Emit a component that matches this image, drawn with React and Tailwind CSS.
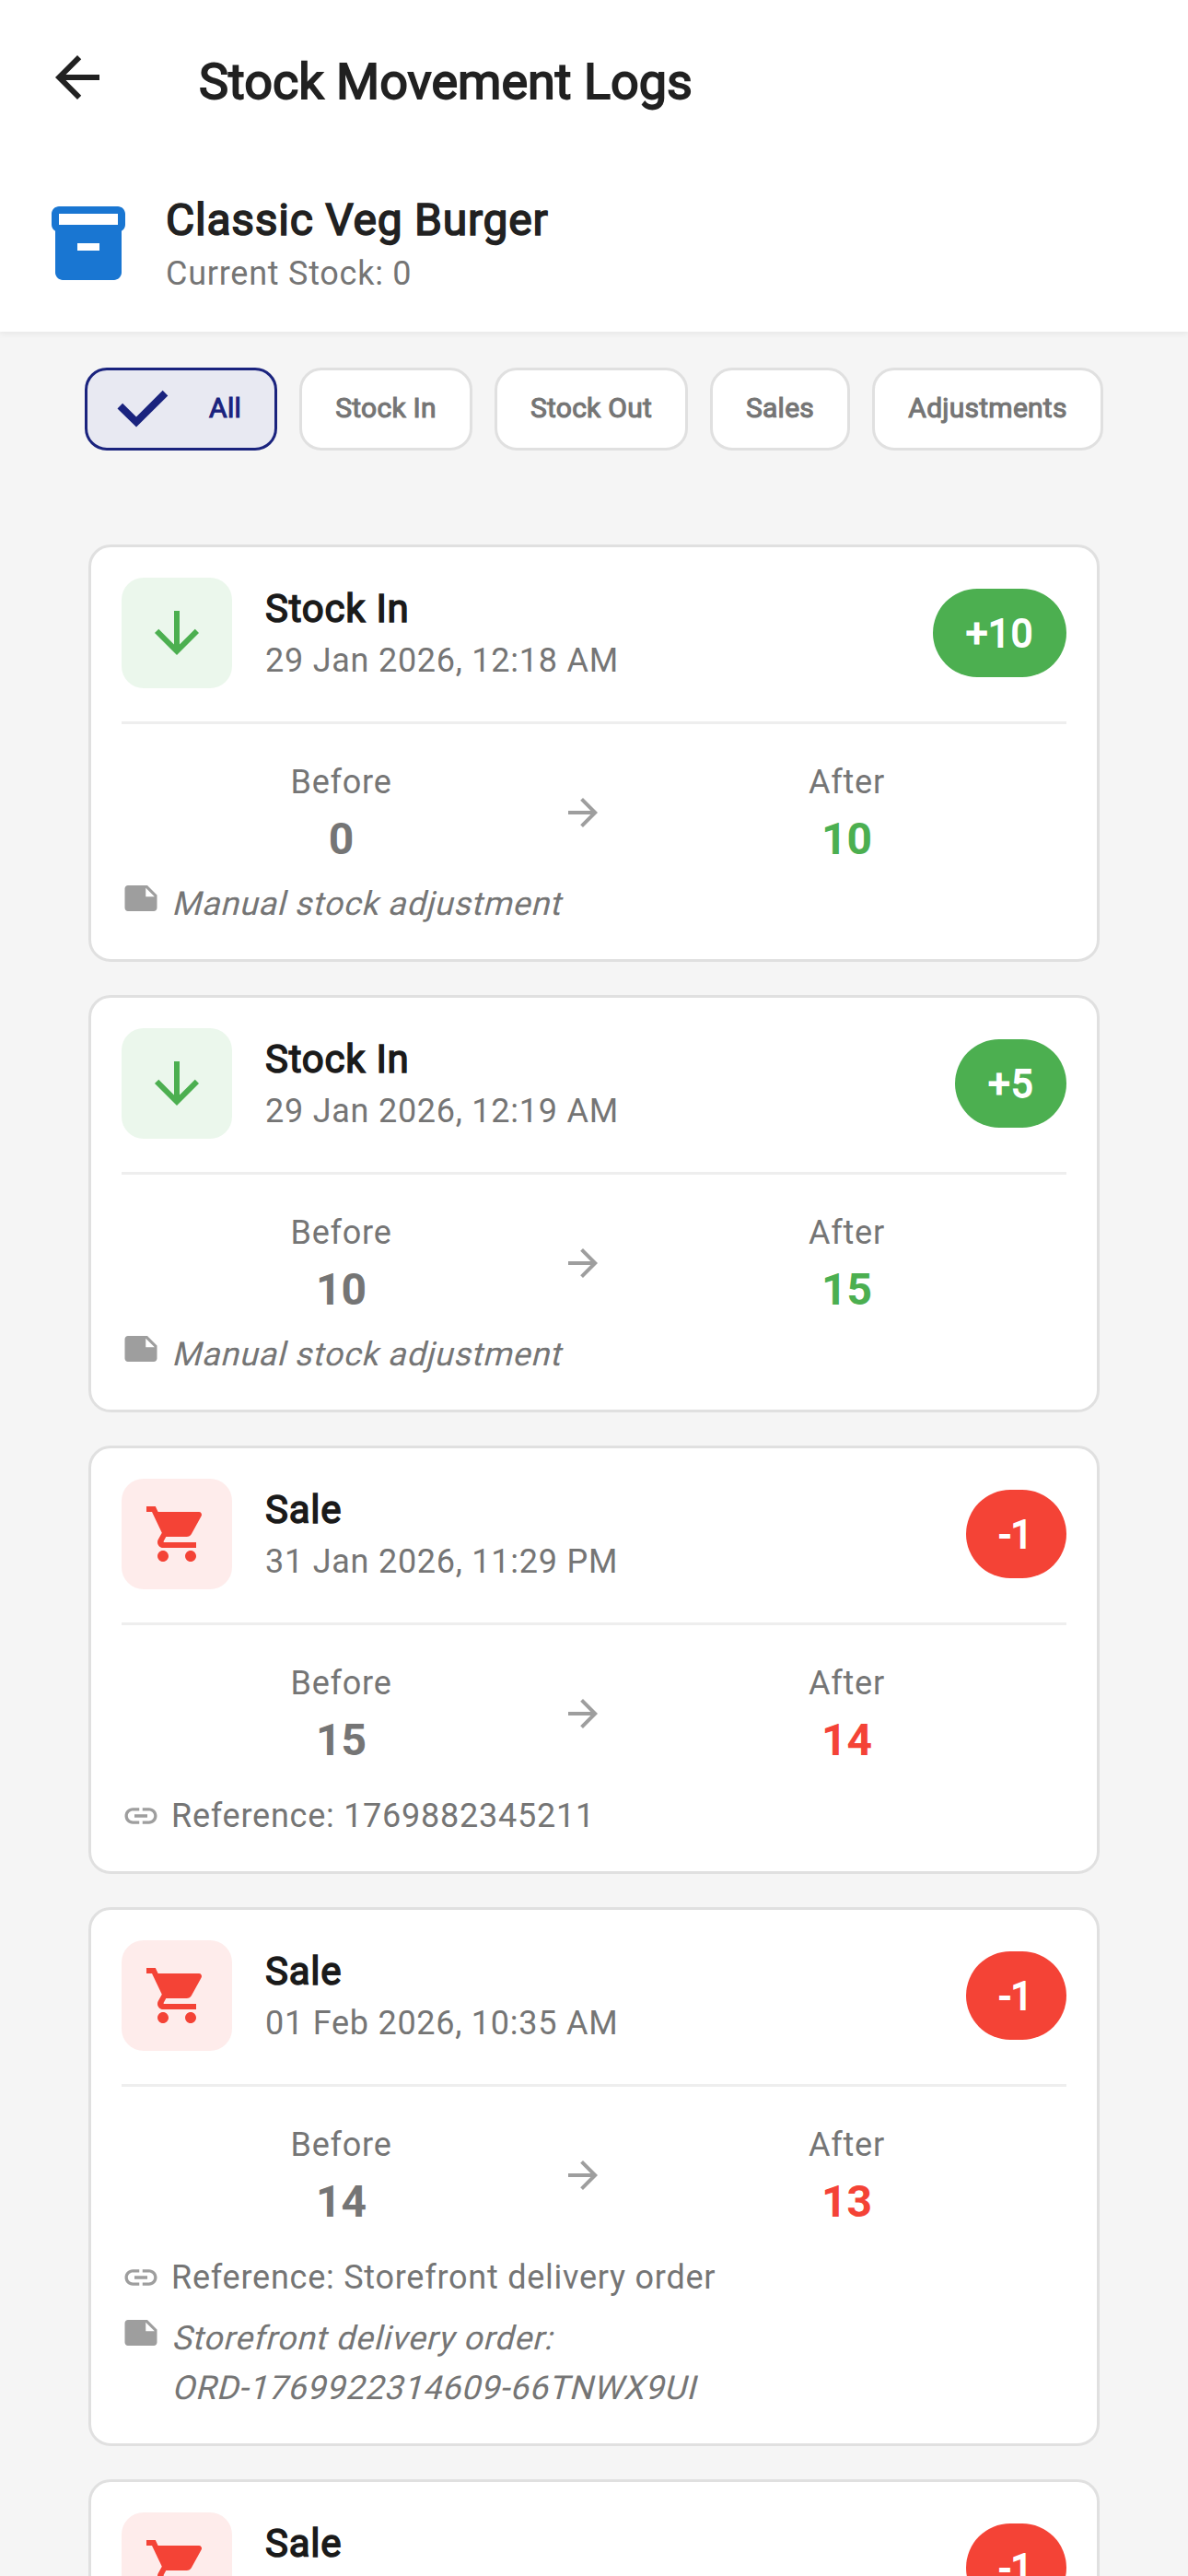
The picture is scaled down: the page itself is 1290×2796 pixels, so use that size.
import React, { useState } from 'react';
import clsx from 'clsx';
import {
  MdArrowBack,
  MdArrowDownward,
  MdArrowForward,
  MdInventory2,
  MdLink,
  MdNote,
  MdShoppingCart,
} from 'react-icons/md';

const FILTERS = [
  { label: 'All', width: 'w-[209px]' },
  { label: 'Stock In', width: 'w-[188px]' },
  { label: 'Stock Out', width: 'w-[210px]' },
  { label: 'Sales', width: 'w-[152px]' },
  { label: 'Adjustments', width: 'w-[251px]' },
];

const LOGS = [
  { id: 1, type: 'Stock In', date: '29 Jan 2026, 12:18 AM', change: 10, before: 0, after: 10, note: ['Manual stock adjustment'] },
  { id: 2, type: 'Stock In', date: '29 Jan 2026, 12:19 AM', change: 5, before: 10, after: 15, note: ['Manual stock adjustment'] },
  { id: 3, type: 'Sale', date: '31 Jan 2026, 11:29 PM', change: -1, before: 15, after: 14, reference: '1769882345211' },
  {
    id: 4,
    type: 'Sale',
    date: '01 Feb 2026, 10:35 AM',
    change: -1,
    before: 14,
    after: 13,
    reference: 'Storefront delivery order',
    note: ['Storefront delivery order:', 'ORD-1769922314609-66TNWX9UI'],
  },
];

function CheckMark() {
  return (
    <svg viewBox="0 0 56 42" className="w-14 h-[42px]" fill="none" stroke="currentColor" strokeWidth="8">
      <path d="M3.3 17.6 L21 35 L52.5 3.7" />
    </svg>
  );
}

function FilterChip({ label, width, selected, onClick }) {
  return (
    <button
      onClick={onClick}
      className={clsx(
        'flex h-[90px] shrink-0 items-center rounded-3xl border-[3px] text-[30px] tracking-[0.25px] [-webkit-text-stroke:1.1px_currentColor]',
        width,
        selected
          ? 'justify-between border-[#1a237e] bg-[#e8e9f2] pl-8 pr-9 text-[#1a237e]'
          : 'justify-center border-[#e0e0e0] bg-white text-[#757575]'
      )}
    >
      {selected && <CheckMark />}
      <span className="pb-[3px]">{label}</span>
    </button>
  );
}

function LogHeader({ type, date, change }) {
  const positive = change > 0;
  const Icon = positive ? MdArrowDownward : MdShoppingCart;

  return (
    <div className="flex h-[120px] items-center">
      <div
        className={clsx(
          'flex size-[120px] items-center justify-center rounded-3xl',
          positive ? 'bg-[#ebf7ec] text-[#4caf50]' : 'bg-[#feeceb] text-[#f44336]'
        )}
      >
        <Icon className="size-[72px]" />
      </div>
      <div className="ml-9 h-[114px] flex-1">
        <div className="pt-px text-[42px] leading-[60px] tracking-[0.75px] text-[#1a1a1a] [-webkit-text-stroke:1.5px_currentColor]">
          {type}
        </div>
        {date && <div className="-mt-px text-[36px] leading-[54px] tracking-[0.75px]">{date}</div>}
      </div>
      <div
        className={clsx(
          'flex h-24 items-center rounded-full px-9 text-[42px] tracking-[0.75px] text-white [-webkit-text-stroke:1.8px_currentColor]',
          positive ? 'bg-[#4caf50]' : 'bg-[#f44336]'
        )}
      >
        {positive ? `+${change}` : change}
      </div>
    </div>
  );
}

function LogCard({ log }) {
  const positive = log.change > 0;

  return (
    <div className="rounded-3xl border-[3px] border-[#e0e0e0] bg-white p-[33px] text-[#757575]">
      <LogHeader type={log.type} date={log.date} change={log.change} />

      <div className="mt-9 h-[3px] bg-[#eeeeee]" />

      {/* Before -> After */}
      <div className="mt-6 flex h-36 items-center">
        <div className="flex-1 pt-1 text-center">
          <div className="text-[36px] leading-[54px] tracking-[0.75px]">Before</div>
          <div className="-mt-px text-[48px] leading-[72px] font-bold">{log.before}</div>
        </div>
        <MdArrowForward className="mr-6 size-12 text-[#9e9e9e]" />
        <div className="flex-1 pt-1 text-center">
          <div className="text-[36px] leading-[54px] tracking-[0.75px]">After</div>
          <div className={clsx('-mt-px text-[48px] leading-[72px] font-bold', positive ? 'text-[#4caf50]' : 'text-[#f44336]')}>
            {log.after}
          </div>
        </div>
      </div>

      {log.reference && (
        <div className="mt-3 flex items-center gap-3">
          <MdLink className="size-[42px] text-[#9e9e9e]" />
          <span className="text-[36px] leading-[54px] tracking-[0.75px]">Reference: {log.reference}</span>
        </div>
      )}
      {log.note && (
        <div className={clsx('flex items-start gap-3', log.reference && 'mt-3')}>
          <MdNote className="size-[42px] text-[#9e9e9e]" />
          <div className="text-[36px] leading-[54px] tracking-[0.75px]">
            {log.note.map((line) => (
              <p key={line} className="origin-[0_40px] -skew-x-[14deg]">{line}</p>
            ))}
          </div>
        </div>
      )}
    </div>
  );
}

function App() {
  const [filter, setFilter] = useState('All');

  return (
    <div className="h-[2796px] overflow-hidden bg-[#f5f5f5] font-['Roboto',sans-serif]">
      <header className="h-[360px] bg-white shadow-[0_3px_6px_rgba(0,0,0,0.05)]">
        <div className="flex h-[168px] items-center pl-12">
          <MdArrowBack className="size-[72px] text-[#212121]" />
          <h1 className="ml-24 pt-[8px] text-[54px] text-[#212121] [-webkit-text-stroke:1.8px_currentColor]">
            Stock Movement Logs
          </h1>
        </div>
        <div className="flex h-48 items-center pt-1 pl-12">
          <MdInventory2 className="-mt-1 size-24 text-[#1976d2]" />
          <div className="ml-9">
            <div className="text-[48px] leading-[60px] tracking-[0.75px] text-[#212121] [-webkit-text-stroke:1.6px_currentColor]">
              Classic Veg Burger
            </div>
            <div className="pt-px text-[36px] leading-[54px] tracking-[0.75px] text-[#757575]">Current Stock: 0</div>
          </div>
        </div>
      </header>

      <div className="flex gap-6 pt-[39px] pl-[92px]">
        {FILTERS.map((f) => (
          <FilterChip key={f.label} {...f} selected={filter === f.label} onClick={() => setFilter(f.label)} />
        ))}
      </div>

      <div className="flex flex-col gap-9 px-24 pt-[102px]">
        {LOGS.map((log) => (
          <LogCard key={log.id} log={log} />
        ))}
        {/* last row runs past the bottom of the screen */}
        <div className="h-[105px] overflow-hidden rounded-t-3xl border-[3px] border-b-0 border-[#e0e0e0] bg-white px-[33px] pt-[33px]">
          <LogHeader type="Sale" change={-1} />
        </div>
      </div>
    </div>
  );
}

export default App;
